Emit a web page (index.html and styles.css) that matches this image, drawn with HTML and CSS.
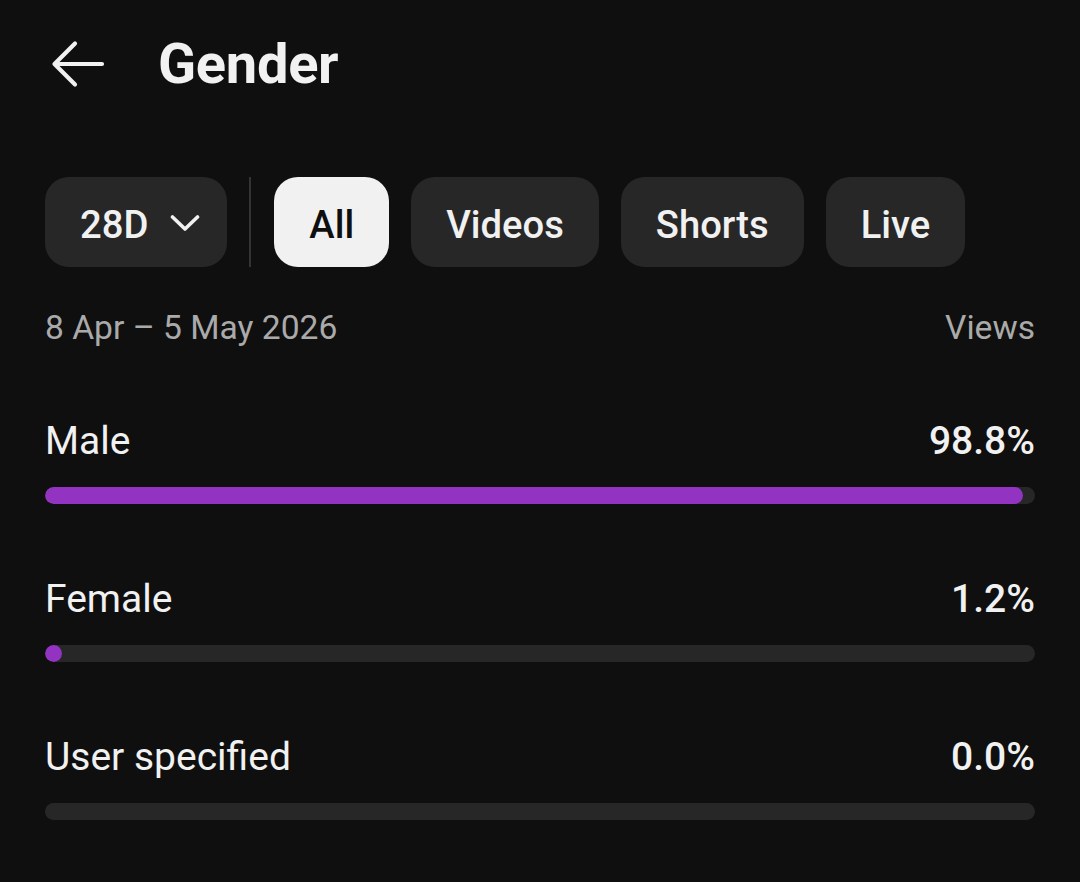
FILE: index.html
```html
<!DOCTYPE html>
<html lang="en">
<head>
<meta charset="utf-8">
<title>Gender</title>
<link rel="stylesheet" href="styles.css">
</head>
<body>
<div class="page">
  <header class="header">
    <svg class="back" width="56" height="48" viewBox="0 0 56 48" aria-hidden="true">
      <path d="M51 24H4M24 3.5L3.5 24L24 44.5" fill="none" stroke="#f1f1f1" stroke-width="4.2" stroke-linecap="round" stroke-linejoin="round"/>
    </svg>
    <h1 class="title">Gender</h1>
  </header>

  <div class="chips">
    <div class="chip chip-period">28D
      <svg class="chev" width="30" height="18" viewBox="0 0 30 18" aria-hidden="true">
        <path d="M2.5 3L15 15L27.5 3" fill="none" stroke="#f1f1f1" stroke-width="3.6" stroke-linecap="round" stroke-linejoin="round"/>
      </svg>
    </div>
    <div class="divider"></div>
    <div class="chip chip-active">All</div>
    <div class="chip">Videos</div>
    <div class="chip">Shorts</div>
    <div class="chip">Live</div>
  </div>

  <div class="meta">
    <span>8 Apr – 5 May 2026</span>
    <span>Views</span>
  </div>

  <div class="rows">
    <div class="row">
      <div class="row-head"><span class="label">Male</span><span class="pct">98.8%</span></div>
      <div class="track"><div class="fill" style="width:98.8%"></div></div>
    </div>
    <div class="row">
      <div class="row-head"><span class="label">Female</span><span class="pct">1.2%</span></div>
      <div class="track"><div class="fill" style="width:1.2%"></div></div>
    </div>
    <div class="row">
      <div class="row-head"><span class="label">User specified</span><span class="pct">0.0%</span></div>
      <div class="track"></div>
    </div>
  </div>
</div>
</body>
</html>
```

FILE: styles.css
```css
* { box-sizing: border-box; }
html, body {
  margin: 0;
  padding: 0;
  background: #0f0f0f;
}
body {
  font-family: Roboto, "Noto Sans", "Liberation Sans", sans-serif;
  color: #f1f1f1;
  width: 1080px;
  height: 882px;
  overflow: hidden;
}
.page {
  padding: 0 45px;
}
.header {
  display: flex;
  align-items: center;
  height: 128px;
}
.back {
  margin-left: 6px;
  flex: none;
}
.title {
  margin: 0 0 0 51px;
  font-size: 56px;
  font-weight: 700;
  line-height: 1;
  letter-spacing: -0.3px;
}
.chips {
  display: flex;
  align-items: stretch;
  gap: 22px;
  margin-top: 49px;
  height: 90px;
}
.chip {
  display: flex;
  align-items: center;
  padding: 5px 35px 0 35px;
  background: #272727;
  border-radius: 24px;
  font-size: 38.2px;
  font-weight: 500;
  color: #f1f1f1;
}
.chip-period {
  padding: 5px 27px 0 35px;
  gap: 22px;
}
.chev { flex: none; margin-top: -4px; }
.chip-active {
  background: #f1f1f1;
  color: #0f0f0f;
}
.divider {
  width: 2px;
  background: #343434;
  margin-right: 1px;
}
.meta {
  display: flex;
  justify-content: space-between;
  margin-top: 41px;
  font-size: 33.6px;
  line-height: 40px;
  color: #aaaaaa;
}
.rows {
  margin-top: 69px;
}
.row {
  height: 158px;
}
.row-head {
  display: flex;
  justify-content: space-between;
  height: 48px;
  line-height: 48px;
  font-size: 39px;
}
.label { font-weight: 400; }
.pct { font-weight: 500; }
.track {
  margin-top: 22px;
  height: 17px;
  border-radius: 9px;
  background: #272727;
  overflow: hidden;
}
.fill {
  height: 100%;
  min-width: 17px;
  border-radius: 9px;
  background: #9333c1;
}
```
